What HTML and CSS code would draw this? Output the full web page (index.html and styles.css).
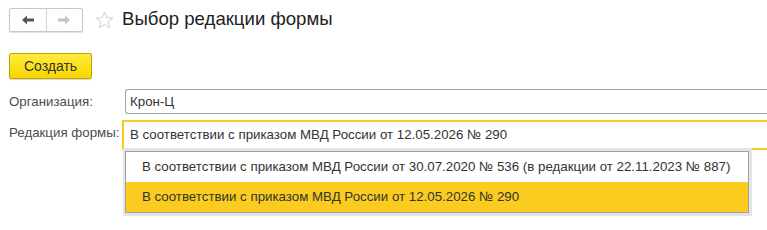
FILE: index.html
```html
<!DOCTYPE html>
<html>
<head>
	<title>Выбор редакции формы</title>
	<meta charset="utf-8">
	<link rel="stylesheet" href="styles.css">
</head>
<body>
	<div class="head">
		<div class="navs">
			<a class="nav back" href="#">
				<svg width="12" height="10" viewBox="0 0 12 10"><path d="M0 5 L5 0.5 L5 3.5 L12 3.5 L12 6.5 L5 6.5 L5 9.5 Z" fill="#555"/></svg>
			</a>
			<a class="nav fwd" href="#">
				<svg width="12" height="10" viewBox="0 0 12 10"><path d="M12 5 L7 0.5 L7 3.5 L0 3.5 L0 6.5 L7 6.5 L7 9.5 Z" fill="#c4c4c4"/></svg>
			</a>
		</div>
		<svg class="star" width="19" height="18" viewBox="0 0 19 18"><path d="M9.5 1 L11.8 6.6 L17.8 7 L13.2 10.9 L14.7 16.8 L9.5 13.6 L4.3 16.8 L5.8 10.9 L1.2 7 L7.2 6.6 Z" fill="none" stroke="#cfcfcf" stroke-width="1"/></svg>
		<h1>Выбор редакции формы</h1>
	</div>
	<div class="bar">
		<button class="create">Создать</button>
	</div>
	<!--поля формы-->
	<div class="form">
		<div class="row">
			<label>Организация:</label>
			<div class="field">Крон-Ц</div>
		</div>
		<div class="row">
			<label>Редакция формы:</label>
			<div class="field active">В соответствии с приказом МВД России от 12.05.2026 № 290</div>
		</div>
		<div class="popup">
			<ul>
				<li>В соответствии с приказом МВД России от 30.07.2020 № 536 (в редакции от 22.11.2023 № 887)</li>
				<li class="current">В соответствии с приказом МВД России от 12.05.2026 № 290</li>
			</ul>
		</div>
	</div>
</body>
</html>
```
FILE: styles.css
```css
*{
	margin:0;
	padding:0;
	box-sizing:border-box;
	list-style:none;
	text-decoration:none;
}
body{
	background:#fff;
	font-family:Arial,"Liberation Sans",sans-serif;
	font-size:13.3px;
	color:#4d4d4d;
	overflow:hidden;
	width:767px;
	height:230px;
}
.head{
	display:flex;
	align-items:center;
	padding:7px 9px 0;
	height:33px;
}
.navs{
	display:flex;
	width:74px;
	height:24px;
	border:1px solid #c8c8c8;
	border-radius:2px;
	background:#fff;
	box-shadow:0 1px 1px rgba(0,0,0,0.12);
}
.nav{
	flex:1;
	display:flex;
	align-items:center;
	justify-content:center;
}
.nav.back{
	border-right:1px solid #d4d4d4;
}
.star{
	margin-left:12px;
	margin-top:-1px;
}
.head h1{
	margin-left:8px;
	font-size:18.6px;
	font-weight:normal;
	color:#222;
	margin-top:-3px;
}
.bar{
	padding:20px 9px 0;
}
.create{
	width:83px;
	height:26px;
	border:1px solid #c2a300;
	border-radius:2px;
	background:linear-gradient(#ffeb3b,#f7d600);
	box-shadow:0 1px 1px rgba(0,0,0,0.15);
	font-family:Arial,"Liberation Sans",sans-serif;
	font-size:14px;
	color:#333;
}
.form{
	position:relative;
	padding-top:10px;
}
.row{
	display:flex;
	align-items:center;
}
.row label{
	width:122px;
	padding-left:9px;
	flex:none;
	white-space:nowrap;
}
.field{
	flex:1;
	height:25px;
	line-height:23px;
	margin-left:3px;
	padding-left:4px;
	border:1px solid #a5a5a5;
	border-right:none;
	border-radius:3px 0 0 3px;
	color:#333;
}
.field.active{
	margin-top:6px;
	margin-left:0;
	height:30px;
	line-height:26px;
	padding-left:6px;
	border:2px solid #f9cc1f;
	border-right:none;
	border-radius:0;
}
/*выпадающий список*/
.popup{
	position:absolute;
	left:123px;
	top:69px;
	width:629px;
	padding:3px 3px 3px 2px;
	background:#e4e4e4;
}
.popup ul{
	border:1px solid #a0a0a0;
	background:#fff;
}
.popup li{
	height:30px;
	line-height:30px;
	padding-left:16px;
	color:#333;
}
.popup .current{
	background:#f9cc1f;
}
```
